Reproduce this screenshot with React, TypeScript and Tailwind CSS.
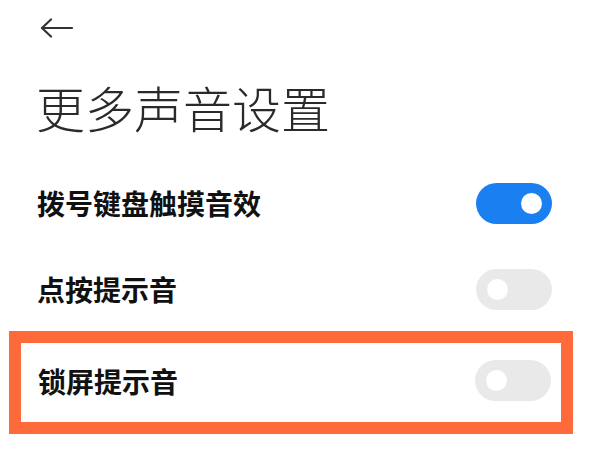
import React from "react";

const CJK = { fontFamily: '"Noto Sans CJK SC", "Noto Sans", sans-serif' };

function Toggle({ on }: { on: boolean }) {
  return (
    <span
      className={
        "relative block h-[41px] w-[76px] shrink-0 rounded-full " +
        (on ? "bg-[#1a80f2]" : "bg-[#e9e9e9]")
      }
    >
      <span
        className={
          "absolute top-[10px] h-[21px] w-[21px] rounded-full bg-white " +
          (on ? "left-[45px]" : "left-[11px]")
        }
      />
    </span>
  );
}

function Row({ label, on }: { label: string; on: boolean }) {
  return (
    <div className="flex h-full items-center justify-between">
      <span className="text-[28px] font-bold leading-none text-[#111]">{label}</span>
      <Toggle on={on} />
    </div>
  );
}

export default function App() {
  return (
    <div className="h-[450px] w-[600px] overflow-hidden bg-white" style={CJK}>
      <div className="pl-[40px] pt-[18px]">
        <svg width="34" height="20" viewBox="0 0 34 20" fill="none" stroke="#333" strokeWidth="2.2" strokeLinecap="round" strokeLinejoin="round">
          <path d="M2 10 H32" />
          <path d="M11 1.5 L2 10 L11 18.5" />
        </svg>
      </div>
      <h1 className="mt-[44px] pl-[36px] text-[49px] font-light leading-[49px] text-[#2a2a2a]">更多声音设置</h1>
      <div className="mt-[28px]">
        <div className="h-[88px] pl-[37px] pr-[48px]">
          <Row label="拨号键盘触摸音效" on={true} />
        </div>
        <div className="h-[84px] pl-[37px] pr-[48px]">
          <Row label="点按提示音" on={false} />
        </div>
        <div className="ml-[9px] mr-[27px] border-[12px] border-[#ff6a3b]">
          <div className="h-[79px] pb-[4px] pl-[17px] pr-[10px]">
            <Row label="锁屏提示音" on={false} />
          </div>
        </div>
      </div>
    </div>
  );
}
